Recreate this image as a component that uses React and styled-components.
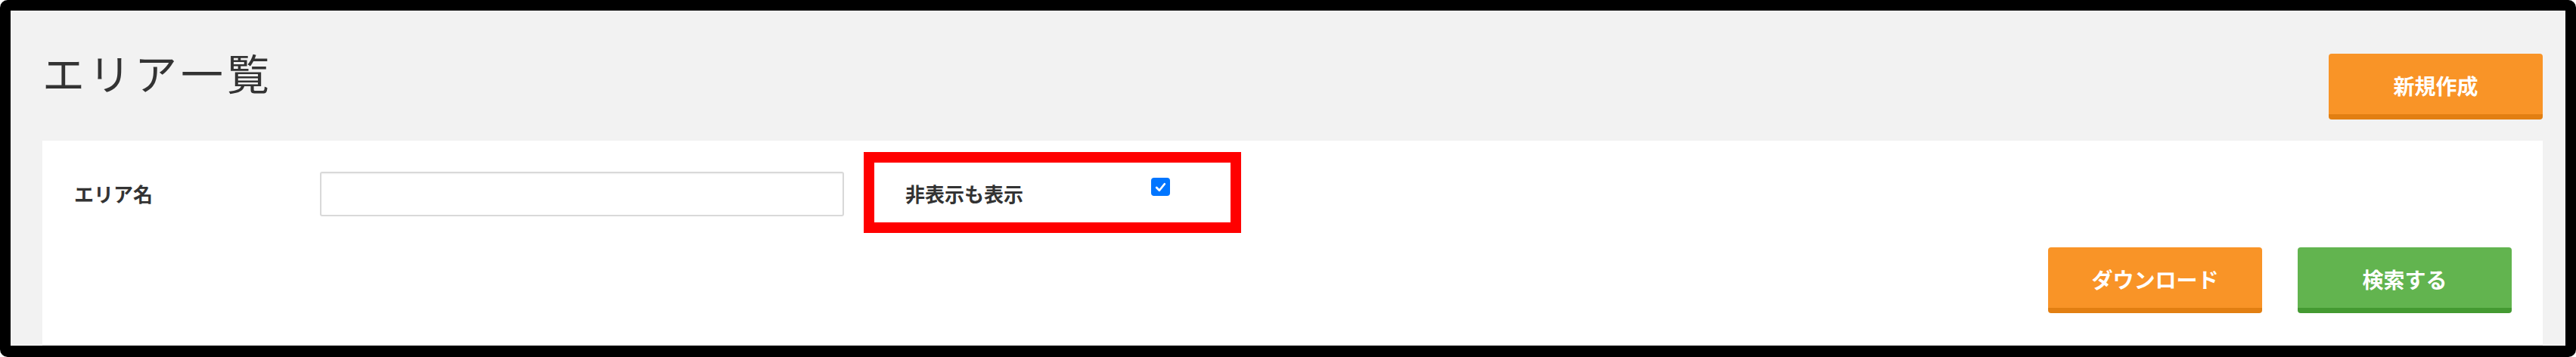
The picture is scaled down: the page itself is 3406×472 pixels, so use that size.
import React from 'react'
import styled, { createGlobalStyle } from 'styled-components'

const GlobalStyle = createGlobalStyle`
  html, body {
    margin: 0;
    padding: 0;
    height: 472px;
    overflow: hidden;
    background: #fff;
  }
  body {
    font-family: "Noto Sans CJK JP", "Noto Sans", sans-serif;
    color: #333;
  }
`

const Frame = styled.div`
  box-sizing: border-box;
  width: 3406px;
  height: 472px;
  border: 14px solid #000;
  border-bottom-width: 15px;
  border-radius: 10px;
  background: #f2f2f2;
  display: flex;
  flex-direction: column;
  padding: 0 30px 0 42px;
  overflow: hidden;
`

const Header = styled.div`
  display: flex;
  align-items: center;
  justify-content: space-between;
  padding: 57px 0 28px;
`

const Title = styled.h1`
  margin: -4px 0 0;
  align-self: flex-start;
  font-size: 56px;
  font-weight: 400;
  line-height: 1;
  letter-spacing: 5px;
  color: #333;
`

const Button = styled.button`
  box-sizing: border-box;
  width: 283px;
  height: 87px;
  border: none;
  border-bottom: 7px solid ${props => props.$shade};
  border-radius: 4px;
  background: ${props => props.$color};
  color: #fff;
  font-family: "Noto Sans CJK JP", sans-serif;
  font-size: 28px;
  font-weight: 700;
  padding: 4px 0 0;
  cursor: pointer;
`

const Panel = styled.div`
  flex: 1;
  background: #fff;
  border-bottom: 1px solid #ddd;
  padding: 15px 41px 0 42px;
  display: flex;
  flex-direction: column;
`

const Row = styled.div`
  display: flex;
  align-items: center;
`

const Label = styled.label`
  width: 325px;
  flex-shrink: 0;
  font-size: 26px;
  font-weight: 700;
  line-height: 1;
  color: #333;
  padding-top: 2px;
`

const TextInput = styled.input`
  box-sizing: border-box;
  width: 693px;
  height: 59px;
  border: 2px solid #d9d9d9;
  border-radius: 3px;
  box-shadow: inset 0 1px 2px rgba(0, 0, 0, 0.06);
  background: #fff;
  outline: none;
  font-size: 26px;
  padding: 0 12px;
  margin-top: 4px;
`

const Highlight = styled.div`
  box-sizing: border-box;
  margin-left: 26px;
  width: 499px;
  height: 107px;
  border: 14px solid #ff0000;
  padding-left: 41px;
  display: flex;
  align-items: center;
`

const Box = styled.span`
  box-sizing: border-box;
  width: 25px;
  height: 24px;
  border-radius: 4px;
  background: #0075ff;
  display: inline-flex;
  align-items: center;
  justify-content: center;
  align-self: flex-start;
  margin-top: 20px;
`

const Actions = styled.div`
  display: flex;
  justify-content: flex-end;
  gap: 47px;
  margin-top: 19px;
`

function Checkbox() {
  return (
    <Box role="checkbox" aria-checked="true">
      <svg width="17" height="17" viewBox="0 0 16 16">
        <path d="M3 8.5 L6.5 12 L13 4" fill="none" stroke="#fff" strokeWidth="2.6" strokeLinecap="round" strokeLinejoin="round" />
      </svg>
    </Box>
  )
}

export default function App() {
  return (
    <>
      <GlobalStyle />
      <Frame>
        <Header>
          <Title>エリア一覧</Title>
          <Button $color="#f99427" $shade="#e27f12">新規作成</Button>
        </Header>
        <Panel>
          <Row>
            <Label>エリア名</Label>
            <TextInput type="text" />
            <Highlight>
              <Label>非表示も表示</Label>
              <Checkbox />
            </Highlight>
          </Row>
          <Actions>
            <Button $color="#f99427" $shade="#e27f12">ダウンロード</Button>
            <Button $color="#62b44f" $shade="#449a32">検索する</Button>
          </Actions>
        </Panel>
      </Frame>
    </>
  )
}
